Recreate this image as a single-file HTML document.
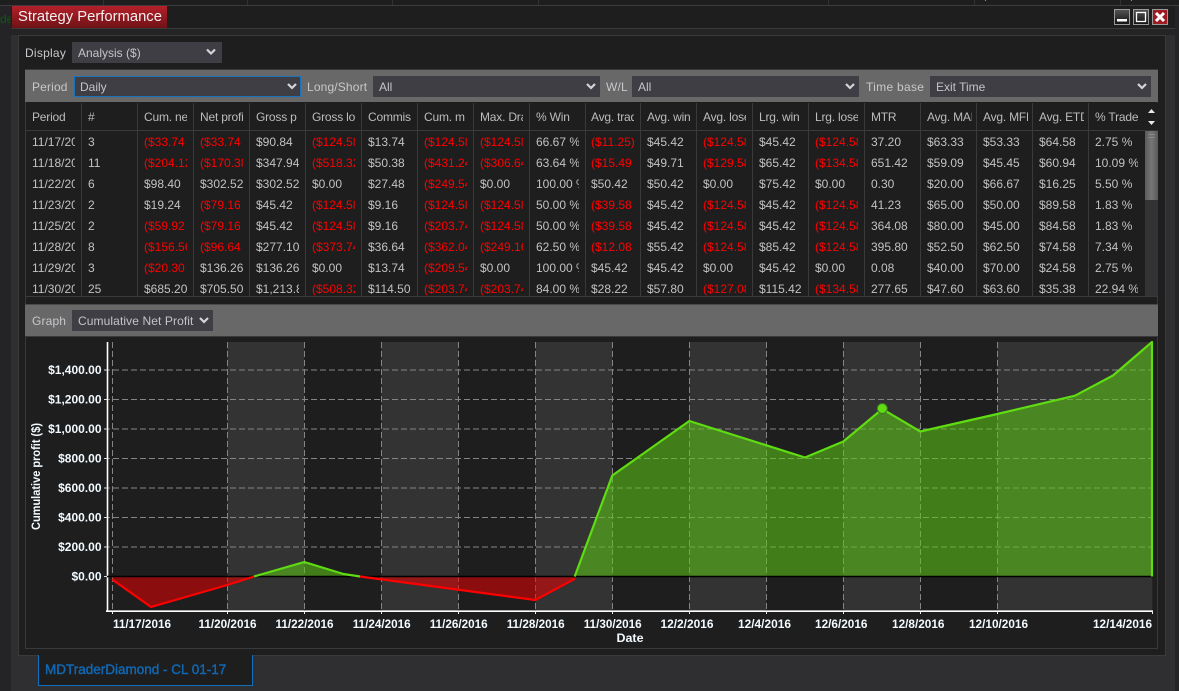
<!DOCTYPE html>
<html>
<head>
<meta charset="utf-8">
<style>
html,body{margin:0;padding:0;width:1179px;height:691px;overflow:hidden;background:#242426;font-family:"Liberation Sans",sans-serif;font-size:12px;color:#c2c2c2}
.a{position:absolute;box-sizing:border-box}
.top{left:0;top:0;width:1179px;height:6px;background:#1e1e1e;border-bottom:1px solid #3c3c3e;overflow:hidden}
.top span{position:absolute;top:-11px;color:#bbb;white-space:nowrap}
.top i{position:absolute;top:0;width:1px;height:6px;background:#333}
.win{left:11px;top:6px;width:1164px;height:685px;background:#2f2f31}
.head{left:11px;top:6px;width:1164px;height:23px;background:#1e1e1e;border-bottom:1px solid #3a3a3c}
.gap{left:11px;top:29px;width:1164px;height:6px;background:#242424}
.inner{left:18px;top:35px;width:1148px;height:621px;background:#1e1e1e;border:1px solid #3a3a3c}
.outer2{left:25px;top:69px;width:1133px;height:580px;border:1px solid #3a3a3c;background:#1e1e1e}
.title{left:12px;top:6px;width:155px;height:22px;background:linear-gradient(#b5202a,#6e1216);color:#f4f0f0;font-size:14.8px;line-height:23px;padding-left:6px;white-space:nowrap}
.bar{background:#686868;left:25px;width:1133px}
.sel{background:#3e3e44;height:21px;line-height:22px;padding-left:6px;color:#c4c4c8;white-space:nowrap}
.lbl{color:#c8c8cc;line-height:22px;white-space:nowrap;letter-spacing:.15px}
.rows{left:26px;top:103px;width:1119px;height:193px;overflow:hidden}
.rw{display:flex;height:21px;line-height:23px;white-space:nowrap}
.hd{height:27px;line-height:29px;margin-bottom:1px;color:#bcbcbc;letter-spacing:-.2px}
.rw span{display:block;flex:none;width:43px;margin:0 7px 0 6px;overflow:hidden}
.rw span:nth-child(10){margin-right:6px}
.hd span:nth-child(n+17):nth-child(-n+19){width:45px;margin-right:5px}
.rw b{font-weight:normal;display:block;flex:none;width:43px;margin:0 7px 0 6px;overflow:hidden;color:#ff0000}
.rw b:nth-child(10){margin-right:6px}
.sep{top:103px;width:1px;height:193px;background:#3a3a3c}
.tab{left:38px;top:655px;width:215px;height:31px;background:#1e1e1e;border:1px solid #1170c0;border-top:none;color:#1168b4;font-size:13.5px;-webkit-text-stroke:.4px #1168b4;line-height:29px;padding-left:6px;white-space:nowrap}
svg{position:absolute;left:0;top:0}
svg text{font-family:"Liberation Sans",sans-serif;font-weight:bold;font-size:12px;fill:#f2faff}
</style>
</head>
<body>
<div class="a win"></div>
<div class="a top">
<span style="left:0;color:#0a7a14">SC Diamond</span>
<span style="left:110px">12 0 / 11</span>
<span style="left:256px">Future S</span>
<span style="left:400px">Execution Alert: Price</span>
<span style="left:838px">True</span>
<span style="left:982px">$4.00</span>
<span style="left:1128px">$0.00</span>
<i style="left:103px"></i><i style="left:247px"></i><i style="left:392px"></i><i style="left:538px"></i><i style="left:828px"></i><i style="left:974px"></i><i style="left:1120px"></i>
</div>
<div class="a" style="left:0;top:11px;width:11px;height:16px;overflow:hidden;color:#0b5a12;line-height:16px;font-size:12px">de</div>
<div class="a head"></div>
<div class="a gap"></div>
<div class="a inner"></div>
<div class="a title">Strategy Performance</div>

<div class="a lbl" style="left:25px;top:42px;letter-spacing:.25px">Display</div>
<div class="a sel" style="left:72px;top:42px;width:150px">Analysis ($)</div>

<div class="a outer2"></div>
<div class="a bar" style="top:70px;height:32px"></div>
<div class="a lbl" style="left:32px;top:76px">Period</div>
<div class="a sel" style="left:74px;top:76px;width:227px;border:1px solid #1a72bc;line-height:20px;padding-left:5px">Daily</div>
<div class="a lbl" style="left:307px;top:76px">Long/Short</div>
<div class="a sel" style="left:373px;top:76px;width:227px">All</div>
<div class="a lbl" style="left:606px;top:76px">W/L</div>
<div class="a sel" style="left:632px;top:76px;width:227px">All</div>
<div class="a lbl" style="left:866px;top:76px;letter-spacing:.3px">Time base</div>
<div class="a sel" style="left:930px;top:76px;width:221px">Exit Time</div>

<div class="a" style="left:26px;top:130px;width:1132px;height:1px;background:#3a3a3c"></div>
<div class="a" style="left:26px;top:296px;width:1132px;height:1px;background:#3a3a3c"></div>
<div class="a sep" style="left:81px"></div><div class="a sep" style="left:137px"></div><div class="a sep" style="left:193px"></div><div class="a sep" style="left:249px"></div><div class="a sep" style="left:305px"></div><div class="a sep" style="left:361px"></div><div class="a sep" style="left:417px"></div><div class="a sep" style="left:473px"></div><div class="a sep" style="left:529px"></div><div class="a sep" style="left:585px"></div><div class="a sep" style="left:640px"></div><div class="a sep" style="left:696px"></div><div class="a sep" style="left:752px"></div><div class="a sep" style="left:808px"></div><div class="a sep" style="left:864px"></div><div class="a sep" style="left:920px"></div><div class="a sep" style="left:976px"></div><div class="a sep" style="left:1032px"></div><div class="a sep" style="left:1088px"></div>

<div class="a rows">
<div class="rw hd"><span>Period</span><span>#</span><span>Cum. net</span><span>Net profit</span><span>Gross p</span><span>Gross loss</span><span>Commission</span><span>Cum. m</span><span>Max. Draw</span><span>% Win</span><span>Avg. trade</span><span>Avg. win</span><span>Avg. loser</span><span>Lrg. win</span><span>Lrg. loser</span><span>MTR</span><span>Avg. MAE</span><span>Avg. MFE</span><span>Avg. ETD</span><span>% Trades</span></div>
<div class="rw"><span>11/17/2016</span><span>3</span><b>($33.74</b><b>($33.74</b><span>$90.84</span><b>($124.58)</b><span>$13.74</span><b>($124.58)</b><b>($124.58)</b><span>66.67 %</span><b>($11.25)</b><span>$45.42</span><b>($124.58)</b><span>$45.42</span><b>($124.58)</b><span>37.20</span><span>$63.33</span><span>$53.33</span><span>$64.58</span><span>2.75 %</span></div>
<div class="rw"><span>11/18/2016</span><span>11</span><b>($204.12)</b><b>($170.38)</b><span>$347.94</span><b>($518.32)</b><span>$50.38</span><b>($431.24)</b><b>($306.64)</b><span>63.64 %</span><b>($15.49</b><span>$49.71</span><b>($129.58)</b><span>$65.42</span><b>($134.58)</b><span>651.42</span><span>$59.09</span><span>$45.45</span><span>$60.94</span><span>10.09 %</span></div>
<div class="rw"><span>11/22/2016</span><span>6</span><span>$98.40</span><span>$302.52</span><span>$302.52</span><span>$0.00</span><span>$27.48</span><b>($249.54)</b><span>$0.00</span><span>100.00 %</span><span>$50.42</span><span>$50.42</span><span>$0.00</span><span>$75.42</span><span>$0.00</span><span>0.30</span><span>$20.00</span><span>$66.67</span><span>$16.25</span><span>5.50 %</span></div>
<div class="rw"><span>11/23/2016</span><span>2</span><span>$19.24</span><b>($79.16</b><span>$45.42</span><b>($124.58)</b><span>$9.16</span><b>($124.58)</b><b>($124.58)</b><span>50.00 %</span><b>($39.58</b><span>$45.42</span><b>($124.58)</b><span>$45.42</span><b>($124.58)</b><span>41.23</span><span>$65.00</span><span>$50.00</span><span>$89.58</span><span>1.83 %</span></div>
<div class="rw"><span>11/25/2016</span><span>2</span><b>($59.92</b><b>($79.16</b><span>$45.42</span><b>($124.58)</b><span>$9.16</span><b>($203.74)</b><b>($124.58)</b><span>50.00 %</span><b>($39.58</b><span>$45.42</span><b>($124.58)</b><span>$45.42</span><b>($124.58)</b><span>364.08</span><span>$80.00</span><span>$45.00</span><span>$84.58</span><span>1.83 %</span></div>
<div class="rw"><span>11/28/2016</span><span>8</span><b>($156.56)</b><b>($96.64</b><span>$277.10</span><b>($373.74)</b><span>$36.64</span><b>($362.04)</b><b>($249.16)</b><span>62.50 %</span><b>($12.08</b><span>$55.42</span><b>($124.58)</b><span>$85.42</span><b>($124.58)</b><span>395.80</span><span>$52.50</span><span>$62.50</span><span>$74.58</span><span>7.34 %</span></div>
<div class="rw"><span>11/29/2016</span><span>3</span><b>($20.30</b><span>$136.26</span><span>$136.26</span><span>$0.00</span><span>$13.74</span><b>($209.54)</b><span>$0.00</span><span>100.00 %</span><span>$45.42</span><span>$45.42</span><span>$0.00</span><span>$45.42</span><span>$0.00</span><span>0.08</span><span>$40.00</span><span>$70.00</span><span>$24.58</span><span>2.75 %</span></div>
<div class="rw"><span>11/30/2016</span><span>25</span><span>$685.20</span><span>$705.50</span><span>$1,213.82</span><b>($508.32)</b><span>$114.50</span><b>($203.74)</b><b>($203.74)</b><span>84.00 %</span><span>$28.22</span><span>$57.80</span><b>($127.08)</b><span>$115.42</span><b>($134.58)</b><span>277.65</span><span>$47.60</span><span>$63.60</span><span>$35.38</span><span>22.94 %</span></div>
</div>

<div class="a" style="left:1145px;top:103px;width:13px;height:193px;background:#333335"></div>
<div class="a" style="left:1145px;top:103px;width:13px;height:27px;background:#1e1e1e"></div>
<div class="a" style="left:1145px;top:131px;width:13px;height:69px;background:linear-gradient(90deg,#5a5a5a,#767676 50%,#5a5a5a)"></div>

<div class="a bar" style="top:304px;height:32px;border-top:1px solid #4a4a4a"></div>
<div class="a" style="left:25px;top:336px;width:1133px;height:1px;background:#3a3a3c"></div>
<div class="a lbl" style="left:32px;top:310px">Graph</div>
<div class="a sel" style="left:72px;top:310px;width:141px;letter-spacing:.1px">Cumulative Net Profit</div>

<div class="a tab">MDTraderDiamond - CL 01-17</div>

<svg width="1179" height="691" viewBox="0 0 1179 691">
<defs><linearGradient id="bg" x1="0" y1="0" x2="0" y2="1"><stop offset="0" stop-color="#555"/><stop offset="1" stop-color="#111"/></linearGradient></defs>
<!-- window buttons -->
<rect x="1114.5" y="9.5" width="15" height="15" fill="url(#bg)" stroke="#9a9a9a"/>
<rect x="1117" y="19" width="10" height="2.5" fill="#fff"/>
<rect x="1133.5" y="9.5" width="15" height="15" fill="url(#bg)" stroke="#9a9a9a"/>
<rect x="1136.5" y="12.5" width="9" height="9" fill="none" stroke="#fff" stroke-width="1.3"/>
<rect x="1152.5" y="9.5" width="15" height="15" fill="#9c1c22" stroke="#9a9a9a"/>
<path d="M1156 13 L1164 21 M1164 13 L1156 21" stroke="#fff" stroke-width="3"/>

<!-- select chevrons -->
<g fill="none" stroke="#d4d4d8" stroke-width="2.2">
<path d="M207 49.5 L211 53.5 L215 49.5"/>
<path d="M288 84 L292 88 L296 84"/>
<path d="M587 84 L591 88 L595 84"/>
<path d="M846 84 L850 88 L854 84"/>
<path d="M1138 84 L1142 88 L1146 84"/>
<path d="M200 318 L204 322 L208 318"/>
</g>

<!-- scrollbar arrows and grip -->
<path d="M1148 113 L1151.5 109 L1155 113 Z" fill="#e8e8e8"/>
<path d="M1148 121 L1151.5 125 L1155 121 Z" fill="#e8e8e8"/>
<path d="M1148 134.5 H1155 M1148 137.5 H1155" stroke="#888" stroke-width="1"/>

<!-- chart bands -->
<g fill="#333333">
<rect x="227.3" y="342" width="77" height="269"/>
<rect x="381.3" y="342" width="77" height="269"/>
<rect x="535.3" y="342" width="77" height="269"/>
<rect x="689.3" y="342" width="77" height="269"/>
<rect x="843.3" y="342" width="77" height="269"/>
<rect x="997.3" y="342" width="155" height="269"/>
</g>

<!-- grid -->
<g stroke="#858585" stroke-width="1" stroke-dasharray="6 3" fill="none">
<path d="M104 370H1152M104 399.5H1152M104 429H1152M104 458.5H1152M104 488H1152M104 517.5H1152M104 547H1152"/>
<path d="M112.5 342V613M227.5 342V613M304.5 342V613M381.5 342V613M458.5 342V613M535.5 342V613M612.5 342V613M689.5 342V613M766.5 342V613M843.5 342V613M920.5 342V613M997.5 342V613"/>
</g>

<!-- area fills -->
<polygon fill="rgba(92,200,22,.56)" points="574.7,576.5 612.3,475.5 689.3,421 805,457.5 843.3,441.5 882.3,409 920.3,431.5 997.3,414 1075,395.7 1113,375.5 1152,342 1152,576.5"/>
<polygon fill="rgba(92,200,22,.56)" points="254,576.5 304.3,562 343.5,574 360,576.5"/>
<polygon fill="rgba(230,0,0,.55)" points="112.3,576.5 112.3,579.5 151,607 227.3,585 254,576.5"/>
<polygon fill="rgba(230,0,0,.55)" points="360,576.5 412,583.5 535.3,600 575,578.7 575,576.5"/>

<!-- axes -->
<path d="M107.5 342V612M106 611.2H1153" stroke="#fff" stroke-width="1.6" fill="none"/>
<path d="M104 370H107M104 399.5H107M104 429H107M104 458.5H107M104 488H107M104 517.5H107M104 547H107M104 576.5H107" stroke="#ddd" stroke-width="1"/>
<path d="M112.5 611V614M227.5 611V614M304.5 611V614M381.5 611V614M458.5 611V614M535.5 611V614M612.5 611V614M689.5 611V614M766.5 611V614M843.5 611V614M920.5 611V614M997.5 611V614M1152.5 611V614" stroke="#eee" stroke-width="1"/>
<path d="M107 576.5H1153" stroke="#000" stroke-width="1.4"/>

<!-- series lines -->
<g fill="none" stroke-linejoin="round">
<polyline stroke="#5fdc12" stroke-width="2.2" points="254,576.5 304.3,562 343.5,574 360,576.5"/>
<polyline stroke="#5fdc12" stroke-width="2.2" points="574.7,576.5 612.3,475.5 689.3,421 805,457.5 843.3,441.5 882.3,409 920.3,431.5 997.3,414 1075,395.7 1113,375.5 1152,342 1152,576.5"/>
<polyline stroke="#ff0000" stroke-width="2.2" points="112.3,579.5 151,607 227.3,585 254,576.5"/>
<polyline stroke="#ff0000" stroke-width="2.2" points="360,576.5 412,583.5 535.3,600 575,578.7"/>
</g>
<circle cx="882.3" cy="408.5" r="5" fill="#5fdc12" stroke="#3d7a20" stroke-width="1"/>

<!-- y labels -->
<g text-anchor="end">
<text x="101.5" y="374">$1,400.00</text>
<text x="101.5" y="403.5">$1,200.00</text>
<text x="101.5" y="433">$1,000.00</text>
<text x="101.5" y="462.5">$800.00</text>
<text x="101.5" y="492">$600.00</text>
<text x="101.5" y="521.5">$400.00</text>
<text x="101.5" y="551">$200.00</text>
<text x="101.5" y="580.5">$0.00</text>
</g>
<text transform="translate(40,530) rotate(-90)" textLength="107" lengthAdjust="spacingAndGlyphs">Cumulative profit ($)</text>

<!-- x labels -->
<g>
<text x="113" y="628" textLength="58" lengthAdjust="spacingAndGlyphs">11/17/2016</text>
<text x="198.5" y="628" textLength="58" lengthAdjust="spacingAndGlyphs">11/20/2016</text>
<text x="275.5" y="628" textLength="58" lengthAdjust="spacingAndGlyphs">11/22/2016</text>
<text x="352.7" y="628" textLength="58" lengthAdjust="spacingAndGlyphs">11/24/2016</text>
<text x="429.7" y="628" textLength="58" lengthAdjust="spacingAndGlyphs">11/26/2016</text>
<text x="506.7" y="628" textLength="58" lengthAdjust="spacingAndGlyphs">11/28/2016</text>
<text x="583.7" y="628" textLength="58" lengthAdjust="spacingAndGlyphs">11/30/2016</text>
<text x="660.5" y="628" textLength="53" lengthAdjust="spacingAndGlyphs">12/2/2016</text>
<text x="738" y="628" textLength="53" lengthAdjust="spacingAndGlyphs">12/4/2016</text>
<text x="815" y="628" textLength="52.5" lengthAdjust="spacingAndGlyphs">12/6/2016</text>
<text x="892" y="628" textLength="52.5" lengthAdjust="spacingAndGlyphs">12/8/2016</text>
<text x="969" y="628" textLength="59" lengthAdjust="spacingAndGlyphs">12/10/2016</text>
<text x="1093" y="628" textLength="59" lengthAdjust="spacingAndGlyphs">12/14/2016</text>
</g>
<text x="616.5" y="642" textLength="27" lengthAdjust="spacingAndGlyphs">Date</text>
</svg>
</body>
</html>
